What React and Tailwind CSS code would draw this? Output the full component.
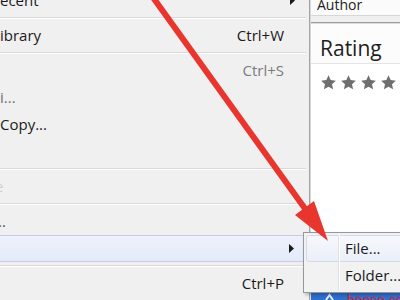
import React from 'react'

function Separator() {
  return (
    <div className="h-[8px] flex flex-col justify-center mr-[3px]">
      <div className="h-px bg-[#d9d9d9]" />
      <div className="h-px bg-white" />
    </div>
  )
}

function SubArrow() {
  return (
    <svg width="5" height="9" viewBox="0 0 5 9">
      <path d="M0 0 L5 4.5 L0 9 Z" fill="#1a1a1a" />
    </svg>
  )
}

function MenuRow({ label, shortcut, sub, muted, labelClass, active }) {
  return (
    <div
      className={`h-[27px] flex items-center mr-[3px] ${
        active ? 'border border-l-0 border-[#c5cae6] rounded-r-[3px] bg-gradient-to-b from-[#eef1fb] to-[#e3eaf9]' : ''
      }`}
    >
      <span className={`flex-1 whitespace-nowrap ${labelClass || 'text-[#1b1b1b]'}`}>{label}</span>
      {shortcut && <span className={muted ? 'text-[#7b7b7b]' : 'text-[#1b1b1b]'}>{shortcut}</span>}
      <span className="w-[22px] flex pl-[6px]">{sub && <SubArrow />}</span>
    </div>
  )
}

function Star() {
  return (
    <svg width="15" height="15" viewBox="0 0 24 24" className="shrink-0">
      <path d="M12 0.5l3.5 7.6 8.3.9-6.2 5.6 1.8 8.2L12 18.6l-7.4 4.2 1.8-8.2L0.2 9l8.3-.9z" fill="#6f6f6f" />
    </svg>
  )
}

export default function App() {
  return (
    <div className="relative w-[400px] h-[300px] overflow-hidden flex bg-[#f0f0f0] font-['Open_Sans',sans-serif] text-[15px]">
      {/* main menu */}
      <div className="w-[310px] shrink-0 h-full border-r border-[#a3a3a3] bg-[#f0f0f0]">
        <div className="-mt-[13px] flex flex-col">
          <MenuRow label="ecent" sub />
          <Separator />
          <MenuRow label="ibrary" shortcut="Ctrl+W" />
          <Separator />
          <MenuRow label="" shortcut="Ctrl+S" muted />
          <MenuRow label="i..." labelClass="text-[#6f6f6f]" />
          <MenuRow label="Copy..." />
          <MenuRow label="" />
          <Separator />
          <MenuRow label="e" labelClass="text-[#cfcfcf] -ml-[5px]" />
          <Separator />
          <MenuRow label=".." labelClass="text-[#555] -ml-[2px]" />
          <MenuRow label="" sub active />
          <Separator />
          <MenuRow label="" shortcut="Ctrl+P" />
        </div>
      </div>

      {/* library panel */}
      <div className="flex-1 min-w-0 h-full flex flex-col bg-white border-l border-[#d8d8d8] overflow-hidden">
        <div className="h-[16px] bg-[#fbfbfb] border-b border-[#d6d6d6] pl-[6px] overflow-hidden">
          <div className="-mt-[2px] text-[14px] leading-[14px] text-[#222]">Author</div>
        </div>
        <div className="h-[6px] bg-[#efefef]" />
        <div className="h-px bg-[#9c9c9c]" />
        <div className="h-px bg-[#dcdcdc]" />
        <div className="h-[40px] bg-[#fcfcfc] border-b border-[#e4e4e4] pt-[10px] pl-[9px]">
          <div className="text-[21px] leading-[28px] text-[#1e1e1e] whitespace-nowrap">Rating</div>
        </div>
        <div className="pt-[11px] pl-[10px] flex gap-[5px]">
          <Star />
          <Star />
          <Star />
          <Star />
          <Star />
        </div>
        <div className="flex-1" />
        <div className="h-[8px] shrink-0 bg-[#2f6fd0] flex overflow-hidden pl-[14px] gap-[13px]">
          <svg width="9" height="8" viewBox="0 0 9 8" className="mt-[1px] shrink-0">
            <path d="M1 7 L4.5 2 L8 7" stroke="#e8eefa" strokeWidth="2" fill="none" />
          </svg>
          <span className="mt-[1px] text-[14px] leading-[14px] text-[#d8262a] whitespace-nowrap font-['Liberation_Sans',sans-serif]">booso.com</span>
        </div>
      </div>

      {/* open submenu */}
      <div className="absolute left-[303px] top-[232px] w-[110px] h-[61px] bg-[#f2f2f2] border border-[#979797] shadow-[2px_2px_3px_rgba(0,0,0,0.25)] p-[2px] flex flex-col">
        <div className="h-[27px] flex items-center pl-[38px] border border-[#d3d8ea] rounded-[3px] bg-gradient-to-b from-[#f6f8fc] to-[#eaeff9]">
          <span className="text-[#1b1b1b]">File...</span>
        </div>
        <div className="h-[27px] flex items-center pl-[39px]">
          <span className="text-[#1b1b1b]">Folder...</span>
        </div>
        <div className="absolute left-[34px] top-[2px] bottom-[2px] w-[2px] flex">
          <div className="w-px bg-[#e0e0e0]" />
          <div className="w-px bg-white" />
        </div>
      </div>

      {/* red pointer arrow */}
      <svg className="absolute inset-0 pointer-events-none" width="400" height="300" viewBox="0 0 400 300">
        <line x1="152" y1="-4" x2="306" y2="210" stroke="#e8362e" strokeWidth="6" />
        <polygon points="314,201 295,215 328,241" fill="#e8362e" />
      </svg>
    </div>
  )
}
